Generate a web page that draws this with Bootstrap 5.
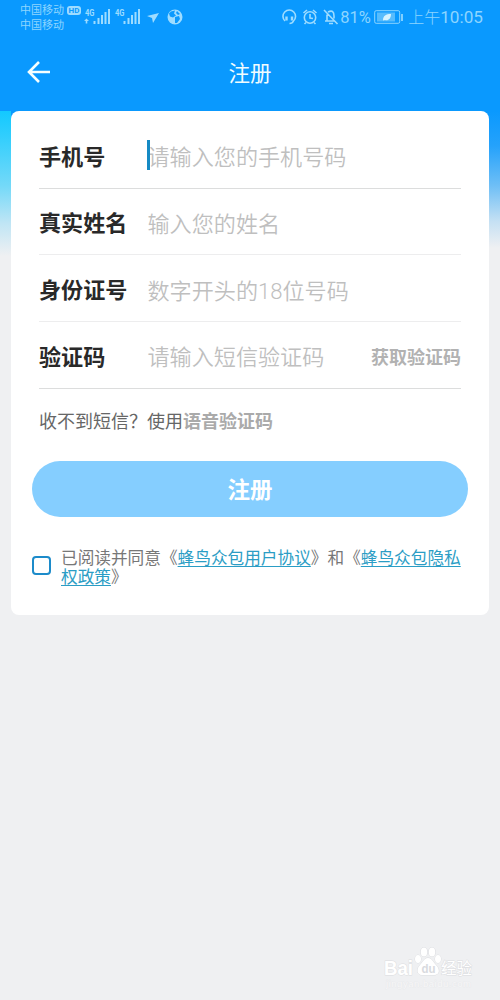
<!DOCTYPE html>
<html lang="zh-CN">
<head>
<meta charset="utf-8">
<meta name="viewport" content="width=device-width, initial-scale=1">
<title>注册</title>
<link href="https://cdn.jsdelivr.net/npm/bootstrap@5.3.0/dist/css/bootstrap.min.css" rel="stylesheet">
<style>
body{font-family:Roboto,"Noto Sans CJK SC",sans-serif;background:#eff0f2;height:1000px;overflow:hidden}
.topbar{background:#0a99fe;height:111px;color:#8dd5ff}
.status{height:36px;padding-left:20px;padding-right:17px}
.carrier{font-size:11px;line-height:16px;padding-top:3px}
.carrier-line{gap:3px}
.hd{font-size:8px;line-height:9px;background:#9edcff;color:#0a99fe;border-radius:3px;padding:0 1px;width:14px;text-align:center}
.status svg{display:block;flex:none}
.titlebar{height:74px;display:grid;grid-template-columns:60px 1fr 60px;color:#f0fcff}
.titlebar h1{font-size:21.5px;line-height:32px;padding-top:2px}
.sky{height:504px;padding:0 11px;background:linear-gradient(#13c9ff 0,#31cefd 25px,#74d9f8 75px,#bfe5f5 112px,#eff0f2 145px) left top/50% 150px no-repeat,linear-gradient(#0a99fe 0,#25a2fb 35px,#6fbff6 75px,#c4e0f3 110px,#eff0f2 137px) right top/50% 150px no-repeat}
.sheet-wrap{background:linear-gradient(#0a99fe,#0a99fe) 0 0/100% 8px no-repeat}
.sheet{height:504px;border-radius:8px;padding:11px 28px 0}
.field{height:66.7px;border-bottom:1.5px solid #ededee;font-size:22.1px;padding-top:5px}
.field.strong{border-color:#dcdddd}
.field label{width:108.5px;font-weight:700;color:#292929}
.field .hint{color:#bfbfbf;font-weight:350;line-height:32px}
.field .entry{position:relative}
.caret{position:absolute;left:-1px;top:-1px;width:3px;height:30px;background:#168ac4}
.getcode{font-size:18px;font-weight:700;color:#b2b2b2}
.voice{height:64px;font-size:18px;color:#666;padding-top:1px}
.voice b{color:#aaa}
.submit{height:56px;margin:8px -7px 0;border-radius:28px;font-weight:700;font-size:22.5px}
.submit:disabled{background:#85ceff;color:#fff;opacity:1;border:0;padding:4px 0 0}
.agree{margin:31px -4px 0 -7px;font-size:16.67px;line-height:19.5px;color:#777}
.agree div{padding-top:1px}
.agree a{color:#2b9dc5;text-underline-offset:2px;text-decoration-thickness:1px}
.tick{flex:none;width:19px;height:19px;margin:8px 10px 0 0;border:2.5px solid #1c8bca;border-radius:4px}
.mark-wrap{position:absolute;right:27px;bottom:8px;width:90px}
.mark-wrap svg{display:block;overflow:visible}
</style>
</head>
<body class="position-relative">
<header class="topbar">
 <div class="status d-flex justify-content-between">
  <div class="d-flex">
   <div class="carrier"><div class="carrier-line d-flex align-items-center" style="height:15px">中国移动<span class="hd fw-bold">HD</span></div><div>中国移动</div></div>
   <svg width="104" height="36" viewBox="0 0 104 36" fill="#9edcff" style="margin-left:3px">
    <text x="1" y="16" font-size="9.500" font-weight="700" textLength="9.500" lengthAdjust="spacingAndGlyphs">4G</text>
    <path d="M0 21l2.500-2.500L5 21H3.300v2.500H1.700V21zM9.500 21h2v3h-2zM13.500 18h2v6h-2zM17 15h2v9h-2zM20.500 12h2v12h-2zM24 9h2v15h-2z"/>
    <text x="31" y="16" font-size="9.500" font-weight="700" textLength="9.500" lengthAdjust="spacingAndGlyphs">4G</text>
    <path d="M39.500 21h2v3h-2zM43.500 18h2v6h-2zM47 15h2v9h-2zM50.500 12h2v12h-2zM54 9h2v15h-2z"/>
    <path d="M63 16l12-3-6 10-1-5z"/>
    <circle cx="91" cy="17" r="7.500"/>
    <path fill="#0a99fe" d="M87 11.500l4-1-1 3 2 2-3 2-3-1-1-3zM91 17l4-1 1 3-3 4-2 0 0-3zM93 11l3 3-2 1-2-2z"/>
   </svg>
  </div>
  <div class="d-flex align-items-center" style="font-size:17px">
   <svg width="58" height="36" viewBox="0 0 58 36" fill="none" stroke="#9edcff" stroke-width="1.600">
    <path d="M4 21a6.300 6.300 0 1 1 8.500 0q-1 2.500-4 2.500"/><path stroke-width="2.400" d="M5.500 16.500v4M11 16.500v4"/>
    <circle cx="29" cy="17.500" r="5.700"/><path d="M29 14v4l3 .5M22.500 13l3.500-3M32 10l3.500 3M25 22.500l-1.500 1.500M33 22.500l1.500 1.500"/>
    <path d="M43 10l13.500 14M44 21h9M46 20.500v-6M47 12q6-3 6 4v2.500M48 23.500h4"/>
   </svg>
   <span style="width:31px;margin-left:1px;white-space:nowrap;font-size:16.5px">81%</span>
   <svg width="30" height="36" viewBox="0 0 30 36" style="margin-left:3px"><rect x=".7" y="10.700" width="25" height="12.600" rx="1.500" fill="#0a99fe" stroke="#8dd5ff"/><rect x="3" y="12.500" width="18" height="9" fill="#57bcfd"/><path fill="#d6f3ff" d="M9 20.500c0-5 3-6.500 8-6.500 0 5-3 7-6 6z"/><path stroke="#8dd5ff" stroke-width="1.800" d="M28 14v7"/></svg>
   <span style="margin-left:4px;white-space:nowrap;font-size:17.2px"><span style="font-size:16px;font-weight:300">上午</span>10:05</span>
  </div>
 </div>
 <div class="titlebar align-items-center">
  <svg width="24" height="22" viewBox="0 0 24 22" style="margin:-2px 0 0 27px" fill="none" stroke="#f5ffff" stroke-width="2.600"><path d="M23 11H3M12 1L2 11l10 10"/></svg>
  <h1 class="m-0 text-center fw-normal">注册</h1>
 </div>
</header>
<main class="sky">
 <div class="sheet-wrap">
 <form class="sheet bg-white">
  <div class="field strong d-flex align-items-center"><label>手机号</label><div class="entry hint"><span class="caret"></span>请输入您的手机号码</div></div>
  <div class="field d-flex align-items-center"><label>真实姓名</label><div class="hint">输入您的姓名</div></div>
  <div class="field d-flex align-items-center"><label>身份证号</label><div class="hint">数字开头的18位号码</div></div>
  <div class="field strong d-flex align-items-center"><label>验证码</label><div class="hint">请输入短信验证码</div><span class="getcode ms-auto">获取验证码</span></div>
  <div class="voice d-flex align-items-center">收不到短信？使用<b>语音验证码</b></div>
  <div class="d-grid"><button type="button" class="submit btn" disabled>注册</button></div>
  <div class="agree d-flex"><span class="tick"></span><div>已阅读并同意《<a href="#">蜂鸟众包用户协议</a>》和《<a href="#">蜂鸟众包隐私<br>权政策</a>》</div></div>
 </form>
 </div>
</main>
<div class="mark-wrap">
 <svg width="90" height="46" viewBox="0 0 90 46" fill="#fff" stroke="#dcdde0" stroke-width="1" paint-order="stroke" font-family="Liberation Sans,'Noto Sans CJK SC',sans-serif">
  <text x="1" y="29" font-size="21" font-weight="700" textLength="29" lengthAdjust="spacingAndGlyphs">Bai</text>
  <ellipse cx="35" cy="13" rx="3" ry="4"/><ellipse cx="41" cy="6" rx="3.200" ry="4.500"/><ellipse cx="49" cy="6" rx="3.200" ry="4.500"/><ellipse cx="55" cy="13" rx="3" ry="4"/>
  <path d="M45 12c-4 0-5 4-8 7-4 4-3 10 2 10h12c6 0 6-6 2-10-3-3-4-7-8-7z"/>
  <text x="38.500" y="27" font-size="13" font-weight="700" fill="#d8dade" stroke="none" textLength="14" lengthAdjust="spacingAndGlyphs">du</text>
  <text x="58" y="28" font-size="15.500">经验</text>
  <text x="3" y="41" font-size="9.500" fill="#f7f7f8" stroke="#e6e7e9" stroke-width=".6" textLength="85">jingyan.baidu.com</text>
 </svg>
</div>
<script src="https://cdn.jsdelivr.net/npm/bootstrap@5.3.0/dist/js/bootstrap.bundle.min.js"></script>
</body>
</html>
